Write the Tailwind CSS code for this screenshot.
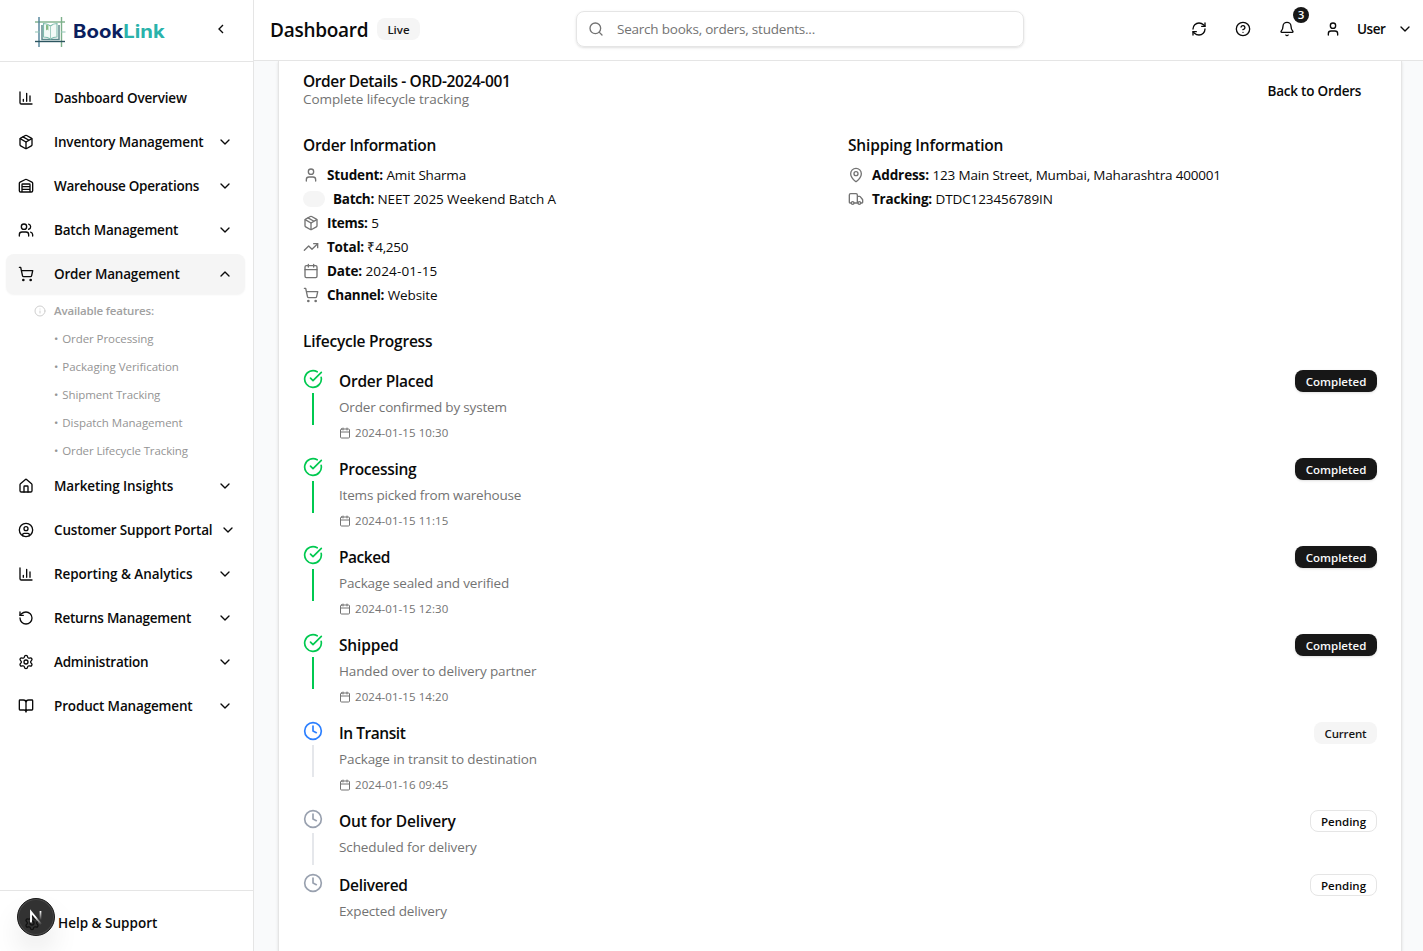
<!DOCTYPE html>
<html lang="en">
<head>
<meta charset="utf-8">
<title>BookLink Dashboard</title>
<script src="https://cdn.jsdelivr.net/npm/@tailwindcss/browser@4"></script>
</head>
<body class="h-screen overflow-hidden bg-white font-['Open_Sans',sans-serif] text-[13.5px] leading-5 text-neutral-950">
<svg class="hidden" xmlns="http://www.w3.org/2000/svg">
  <symbol id="chart" viewBox="0 0 24 24"><path d="M3 3v16a2 2 0 0 0 2 2h16M18 17V9M13 17V5M8 17v-3"/></symbol>
  <symbol id="package" viewBox="0 0 24 24"><path d="M11 21.73a2 2 0 0 0 2 0l7-4A2 2 0 0 0 21 16V8a2 2 0 0 0-1-1.73l-7-4a2 2 0 0 0-2 0l-7 4A2 2 0 0 0 3 8v8a2 2 0 0 0 1 1.73zM12 22V12"/><path d="M3.29 7 12 12l8.71-5M7.5 4.27l9 5.15"/></symbol>
  <symbol id="warehouse" viewBox="0 0 24 24"><path d="M18 21V10a1 1 0 0 0-1-1H7a1 1 0 0 0-1 1v11M22 19a2 2 0 0 1-2 2H4a2 2 0 0 1-2-2V8a2 2 0 0 1 1.132-1.803l7.95-3.974a2 2 0 0 1 1.837 0l7.948 3.974A2 2 0 0 1 22 8zM6 13h12M6 17h12"/></symbol>
  <symbol id="users" viewBox="0 0 24 24"><path d="M16 21v-2a4 4 0 0 0-4-4H6a4 4 0 0 0-4 4v2M16 3.128a4 4 0 0 1 0 7.744M22 21v-2a4 4 0 0 0-3-3.87"/><circle cx="9" cy="7" r="4"/></symbol>
  <symbol id="cart" viewBox="0 0 24 24"><circle cx="8" cy="21" r="1"/><circle cx="19" cy="21" r="1"/><path d="M2.05 2.05h2l2.66 12.42a2 2 0 0 0 2 1.58h9.78a2 2 0 0 0 1.95-1.57l1.65-7.43H5.12"/></symbol>
  <symbol id="home" viewBox="0 0 24 24"><path d="M15 21v-8a1 1 0 0 0-1-1h-4a1 1 0 0 0-1 1v8"/><path d="M3 10a2 2 0 0 1 .709-1.528l7-6a2 2 0 0 1 2.582 0l7 6A2 2 0 0 1 21 10v9a2 2 0 0 1-2 2H5a2 2 0 0 1-2-2z"/></symbol>
  <symbol id="usercircle" viewBox="0 0 24 24"><circle cx="12" cy="12" r="10"/><circle cx="12" cy="10" r="3"/><path d="M7 20.662V19a2 2 0 0 1 2-2h6a2 2 0 0 1 2 2v1.662"/></symbol>
  <symbol id="rotate" viewBox="0 0 24 24"><path d="M3 12a9 9 0 1 0 9-9 9.75 9.75 0 0 0-6.74 2.74L3 8"/><path d="M3 3v5h5"/></symbol>
  <symbol id="gear" viewBox="0 0 24 24"><path d="M9.671 4.136a2.34 2.34 0 0 1 4.659 0 2.34 2.34 0 0 0 3.319 1.915 2.34 2.34 0 0 1 2.33 4.033 2.34 2.34 0 0 0 0 3.831 2.34 2.34 0 0 1-2.33 4.033 2.34 2.34 0 0 0-3.319 1.915 2.34 2.34 0 0 1-4.659 0 2.34 2.34 0 0 0-3.32-1.915 2.34 2.34 0 0 1-2.33-4.033 2.34 2.34 0 0 0 0-3.831A2.34 2.34 0 0 1 6.35 6.051a2.34 2.34 0 0 0 3.319-1.915"/><circle cx="12" cy="12" r="3"/></symbol>
  <symbol id="book" viewBox="0 0 24 24"><path d="M12 7v14M3 18a1 1 0 0 1-1-1V4a1 1 0 0 1 1-1h5a4 4 0 0 1 4 4 4 4 0 0 1 4-4h5a1 1 0 0 1 1 1v13a1 1 0 0 1-1 1h-6a3 3 0 0 0-3 3 3 3 0 0 0-3-3z"/></symbol>
  <symbol id="down" viewBox="0 0 24 24"><path d="m6 9 6 6 6-6"/></symbol>
  <symbol id="up" viewBox="0 0 24 24"><path d="m18 15-6-6-6 6"/></symbol>
  <symbol id="left" viewBox="0 0 24 24"><path d="m15 18-6-6 6-6"/></symbol>
  <symbol id="info" viewBox="0 0 24 24"><circle cx="12" cy="12" r="10"/><path d="M12 16v-4M12 8h.01"/></symbol>
  <symbol id="search" viewBox="0 0 24 24"><circle cx="11" cy="11" r="8"/><path d="m21 21-4.3-4.3"/></symbol>
  <symbol id="refresh" viewBox="0 0 24 24"><path d="M3 12a9 9 0 0 1 9-9 9.75 9.75 0 0 1 6.74 2.74L21 8"/><path d="M21 3v5h-5M21 12a9 9 0 0 1-9 9 9.75 9.75 0 0 1-6.74-2.74L3 16"/><path d="M8 16H3v5"/></symbol>
  <symbol id="help" viewBox="0 0 24 24"><circle cx="12" cy="12" r="10"/><path d="M9.09 9a3 3 0 0 1 5.83 1c0 2-3 3-3 3M12 17h.01"/></symbol>
  <symbol id="bell" viewBox="0 0 24 24"><path d="M10.268 21a2 2 0 0 0 3.464 0M3.262 15.326A1 1 0 0 0 4 17h16a1 1 0 0 0 .74-1.673C19.41 13.956 18 12.499 18 8A6 6 0 0 0 6 8c0 4.499-1.411 5.956-2.738 7.326"/></symbol>
  <symbol id="user" viewBox="0 0 24 24"><path d="M19 21v-2a4 4 0 0 0-4-4H9a4 4 0 0 0-4 4v2"/><circle cx="12" cy="7" r="4"/></symbol>
  <symbol id="trend" viewBox="0 0 24 24"><path d="M16 7h6v6"/><path d="m22 7-8.5 8.5-5-5L2 17"/></symbol>
  <symbol id="calendar" viewBox="0 0 24 24"><path d="M8 2v4M16 2v4M3 10h18"/><rect width="18" height="18" x="3" y="4" rx="2"/></symbol>
  <symbol id="pin" viewBox="0 0 24 24"><path d="M20 10c0 4.993-5.539 10.193-7.399 11.799a1 1 0 0 1-1.202 0C9.539 20.193 4 14.993 4 10a8 8 0 0 1 16 0"/><circle cx="12" cy="10" r="3"/></symbol>
  <symbol id="truck" viewBox="0 0 24 24"><path d="M14 18V6a2 2 0 0 0-2-2H4a2 2 0 0 0-2 2v11a1 1 0 0 0 1 1h2M15 18H9M19 18h2a1 1 0 0 0 1-1v-3.65a1 1 0 0 0-.22-.624l-3.48-4.35A1 1 0 0 0 17.52 8H14"/><circle cx="17" cy="18" r="2"/><circle cx="7" cy="18" r="2"/></symbol>
  <symbol id="check" viewBox="0 0 24 24"><path d="M21.801 10A10 10 0 1 1 17 3.335"/><path d="m9 11 3 3L22 4"/></symbol>
  <symbol id="clock" viewBox="0 0 24 24"><circle cx="12" cy="12" r="10"/><path d="M12 6v6l4 2"/></symbol>
</svg>

<div class="flex h-full">
  <aside class="relative flex w-[254px] shrink-0 flex-col border-r border-neutral-200 bg-white">
    <div class="flex h-[62px] shrink-0 items-center border-b border-neutral-200 pl-[35px]">
      <svg class="mt-[3px] size-[31px]" viewBox="0 0 31 31" fill="none">
        <path d="M0 5h30" stroke="#7db08a" stroke-width="1.4"/>
        <path d="M4 0v30" stroke="#4d8097" stroke-width="1.4"/>
        <path d="M26.500 0v30" stroke="#7db08a" stroke-width="1.4"/>
        <path d="M0 24.500h30" stroke="#2c5560" stroke-width="1.4"/>
        <path d="M0 15h5M26 15h4.500" stroke="#8fc3b4" stroke-width="1.2"/>
        <path d="M7 8v14.500h17V8" stroke="#5f8a8c" stroke-width="1.5"/>
        <path d="M15.500 9C13 7 10.500 6.500 8.500 6.500V20c2.500 0 5 .6 7 2 2-1.400 4-2 6.500-2V6.500c-2 0-4.500.5-6.500 2.500z" fill="#f3faf7" stroke="#7fbcae" stroke-width="1.100"/>
        <path d="M15.500 9v13" stroke="#a3cdc2" stroke-width="1"/>
        <path d="M11 7.500v6l1.200-1 1.200 1V8.500" fill="#86bb86"/>
      </svg>
      <span class="ml-[7px] w-[92px] origin-left scale-x-110 font-['Inter',sans-serif] text-[18.5px] font-bold text-[#0b1f5e]">Book<span class="text-[#2ab3ab]">Link</span></span>
      <svg class="relative -top-0.5 ml-12 size-4 fill-none stroke-current stroke-2"><use href="#left"/></svg>
    </div>

    <nav class="flex flex-1 flex-col gap-1 pt-4 pr-2 pl-1.5 font-semibold [&_svg]:size-4 [&_svg]:shrink-0 [&_svg]:fill-none [&_svg]:stroke-current [&_svg]:stroke-2 [&_svg]:[stroke-linecap:round] [&_svg]:[stroke-linejoin:round]">
      <a class="flex h-10 items-center gap-5 px-3"><svg><use href="#chart"/></svg><span class="flex-1 tracking-[-0.2px]">Dashboard Overview</span></a>
      <a class="flex h-10 items-center gap-5 px-3"><svg><use href="#package"/></svg><span class="flex-1 tracking-[-0.17px]">Inventory Management</span><svg class="-ml-5"><use href="#down"/></svg></a>
      <a class="flex h-10 items-center gap-5 px-3"><svg><use href="#warehouse"/></svg><span class="flex-1 tracking-[-0.27px]">Warehouse Operations</span><svg class="-ml-5"><use href="#down"/></svg></a>
      <a class="flex h-10 items-center gap-5 px-3"><svg><use href="#users"/></svg><span class="flex-1 tracking-[-0.2px]">Batch Management</span><svg><use href="#down"/></svg></a>
      <div class="flex flex-col">
        <a class="flex h-10 items-center gap-5 rounded-lg bg-neutral-100 px-3 shadow-xs"><svg><use href="#cart"/></svg><span class="flex-1 tracking-[-0.18px]">Order Management</span><svg><use href="#up"/></svg></a>
        <div class="flex flex-col pt-[3px] pb-px pl-7 text-[11.5px] font-normal text-[#949494]">
          <div class="flex h-7 items-center gap-2 font-semibold text-neutral-400"><svg class="size-3! opacity-50"><use href="#info"/></svg><span class="tracking-[-0.17px]">Available features:</span></div>
          <div class="flex h-7 items-center gap-1 pl-5 tracking-[-0.08px]"><span>•</span>Order Processing</div>
          <div class="flex h-7 items-center gap-1 pl-5 tracking-[-0.03px]"><span>•</span>Packaging Verification</div>
          <div class="flex h-7 items-center gap-1 pl-5 tracking-[-0.1px]"><span>•</span>Shipment Tracking</div>
          <div class="flex h-7 items-center gap-1 pl-5 tracking-[-0.03px]"><span>•</span>Dispatch Management</div>
          <div class="flex h-7 items-center gap-1 pl-5 tracking-[-0.11px]"><span>•</span>Order Lifecycle Tracking</div>
        </div>
      </div>
      <div class="-mt-1 flex flex-col gap-1">
        <a class="flex h-10 items-center gap-5 px-3"><svg><use href="#home"/></svg><span class="flex-1 tracking-[-0.12px]">Marketing Insights</span><svg><use href="#down"/></svg></a>
        <a class="flex h-10 items-center gap-5 pr-[9px] pl-3"><svg><use href="#usercircle"/></svg><span class="flex-1 tracking-[-0.17px] whitespace-nowrap">Customer Support Portal</span><svg class="-ml-5"><use href="#down"/></svg></a>
        <a class="flex h-10 items-center gap-5 px-3"><svg><use href="#chart"/></svg><span class="flex-1 tracking-[-0.06px]">Reporting &amp; Analytics</span><svg class="-ml-5"><use href="#down"/></svg></a>
        <a class="flex h-10 items-center gap-5 px-3"><svg><use href="#rotate"/></svg><span class="flex-1 tracking-[-0.24px]">Returns Management</span><svg class="-ml-5"><use href="#down"/></svg></a>
        <a class="flex h-10 items-center gap-5 px-3"><svg><use href="#gear"/></svg><span class="flex-1 tracking-[-0.24px]">Administration</span><svg><use href="#down"/></svg></a>
        <a class="flex h-10 items-center gap-5 px-3"><svg><use href="#book"/></svg><span class="flex-1 tracking-[-0.16px]">Product Management</span><svg class="-ml-5"><use href="#down"/></svg></a>
      </div>
    </nav>

    <div class="flex h-[61px] shrink-0 items-center border-t border-neutral-200 pt-1 pl-6 font-semibold">
      <svg class="size-4 fill-none stroke-current stroke-2"><use href="#gear"/></svg>
      <span class="ml-[18px]">Help &amp; Support</span>
    </div>
    <!-- developer tools button floating over the footer -->
    <div class="absolute top-[898px] left-[17px] flex size-[38px] items-center justify-center rounded-full border border-[#1a1a1a] bg-[#323232] shadow-[inset_0_0_0_1px_#4a4a4a,0_16px_32px_-8px_rgba(0,0,0,0.24)]">
      <svg class="absolute top-4 left-[6px] size-4 fill-none stroke-[#111] stroke-2"><use href="#gear"/></svg>
      <svg class="relative size-10 shrink-0" viewBox="0 0 40 40" fill="none">
        <defs>
          <linearGradient id="diag" gradientUnits="userSpaceOnUse" x1="20" y1="20" x2="26" y2="27"><stop stop-color="#fff"/><stop offset="1" stop-color="#fff" stop-opacity="0"/></linearGradient>
          <linearGradient id="bar" gradientUnits="userSpaceOnUse" x1="25" y1="14" x2="25" y2="23"><stop stop-color="#fff"/><stop offset="1" stop-color="#fff" stop-opacity="0"/></linearGradient>
        </defs>
        <path d="M15 25.500V14.800L25.800 28" stroke="url(#diag)" stroke-width="1.900"/>
        <path d="M24.500 14v9" stroke="url(#bar)" stroke-width="1.700"/>
      </svg>
    </div>
  </aside>

  <div class="flex min-w-0 flex-1 flex-col bg-gray-50">
    <header class="flex h-[61px] shrink-0 items-center border-b border-neutral-200 bg-white pr-2.5 pb-[2px] pl-4 [&_svg]:size-4 [&_svg]:shrink-0 [&_svg]:fill-none [&_svg]:stroke-current [&_svg]:stroke-2 [&_svg]:[stroke-linecap:round] [&_svg]:[stroke-linejoin:round]">
      <h1 class="w-[107px] pt-0.5 text-[19px] font-semibold tracking-[-0.27px]">Dashboard</h1>
      <span class="flex h-[22px] w-[43px] items-center justify-center rounded-lg bg-neutral-100 pt-px text-[11.5px] font-semibold text-neutral-900">Live</span>
      <div class="ml-[156px] flex h-9 w-[448px] items-center gap-[13px] rounded-lg border border-neutral-200 pl-[11px] text-neutral-500 shadow-sm">
        <svg><use href="#search"/></svg><span class="tracking-[-0.22px]">Search books, orders, students...</span>
      </div>
      <div class="ml-auto flex items-center font-semibold">
        <svg><use href="#refresh"/></svg>
        <svg class="ml-7"><use href="#help"/></svg>
        <div class="relative ml-7"><svg><use href="#bell"/></svg>
          <span class="absolute -top-[14px] left-[14px] flex size-4 items-center justify-center rounded-full bg-neutral-900 text-[11.5px] text-white">3</span></div>
        <svg class="ml-[30px]"><use href="#user"/></svg>
        <span class="ml-4 w-10 tracking-[-0.45px]">User</span>
        <svg><use href="#down"/></svg>
      </div>
    </header>

    <main class="flex min-h-0 flex-1 overflow-hidden pr-[21px] pl-6 [&_svg]:shrink-0 [&_svg]:fill-none [&_svg]:stroke-current [&_svg]:stroke-2 [&_svg]:[stroke-linecap:round] [&_svg]:[stroke-linejoin:round]">
      <section class="flex flex-1 flex-col border-x border-neutral-200 bg-white px-6 shadow-sm">
        <div class="flex h-[63px] items-start justify-between pt-2.5">
          <div class="flex flex-col">
            <h2 class="h-[18px] text-[15.5px] leading-5 font-semibold tracking-[-0.39px]">Order Details - ORD-2024-001</h2>
            <p class="tracking-[-0.07px] text-neutral-500">Complete lifecycle tracking</p>
          </div>
          <button class="mt-2.5 mr-4 w-[93.500px] text-left font-semibold tracking-[-0.22px] whitespace-nowrap">Back to Orders</button>
        </div>

        <div class="grid h-[207px] grid-cols-[545px_1fr] pt-[11px]">
          <div>
            <h3 class="mb-2.5 h-5 text-[15.5px] font-semibold tracking-[-0.3px]">Order Information</h3>
            <div class="flex flex-col gap-1 [&_svg]:size-4 [&_svg]:text-neutral-500">
              <div class="flex h-5 items-center gap-2"><svg><use href="#user"/></svg><p><b class="tracking-[-0.16px]">Student:</b> <span class="tracking-[-0.18px]">Amit Sharma</span></p></div>
              <div class="flex h-5 items-center gap-2"><i class="h-4 w-[22px] rounded-full bg-neutral-100"></i><p><b class="tracking-[-0.29px]">Batch:</b> <span class="tracking-[-0.09px]">NEET 2025 Weekend Batch A</span></p></div>
              <div class="flex h-5 items-center gap-2"><svg><use href="#package"/></svg><p><b class="tracking-[-0.25px]">Items:</b> 5</p></div>
              <div class="flex h-5 items-center gap-2"><svg><use href="#trend"/></svg><p><b class="tracking-[-0.2px]">Total:</b> <span class="tracking-[-0.28px]">₹4,250</span></p></div>
              <div class="flex h-5 items-center gap-2"><svg><use href="#calendar"/></svg><p><b class="tracking-[-0.17px]">Date:</b> <span class="tracking-[0.15px]">2024-01-15</span></p></div>
              <div class="flex h-5 items-center gap-2"><svg><use href="#cart"/></svg><p><b class="tracking-[-0.27px]">Channel:</b> <span class="tracking-[-0.1px]">Website</span></p></div>
            </div>
          </div>
          <div>
            <h3 class="mb-2.5 h-5 text-[15.5px] font-semibold tracking-[-0.17px]">Shipping Information</h3>
            <div class="flex flex-col gap-1 [&_svg]:size-4 [&_svg]:text-neutral-500">
              <div class="flex h-5 items-center gap-2"><svg><use href="#pin"/></svg><p><b class="tracking-[-0.1px]">Address:</b> <span class="tracking-[-0.18px]">123 Main Street, Mumbai, Maharashtra 400001</span></p></div>
              <div class="flex h-5 items-center gap-2"><svg><use href="#truck"/></svg><p><b class="tracking-[-0.21px]">Tracking:</b> <span class="tracking-[-0.11px]">DTDC123456789IN</span></p></div>
            </div>
          </div>
        </div>

        <h3 class="mb-[18px] h-5 text-[15.5px] font-semibold tracking-[-0.22px]">Lifecycle Progress</h3>

        <div class="flex flex-col">
          <div class="flex h-[88px] gap-4">
            <div class="flex w-5 flex-col items-center gap-1"><svg class="size-5 text-[#00c950]"><use href="#check"/></svg><i class="h-8 w-0.5 bg-[#00c950]"></i></div>
            <div class="flex-1"><h4 class="text-[15.5px] leading-6 font-semibold tracking-[-0.25px]">Order Placed</h4><p class="mt-1 tracking-[-0.17px] text-neutral-500">Order confirmed by system</p><p class="mt-2 flex h-4 items-center gap-1 text-[11.5px] tracking-[0.06px] text-neutral-500"><svg class="size-3"><use href="#calendar"/></svg>2024-01-15 10:30</p></div>
            <span class="mt-px flex h-[22px] w-[82px] items-center justify-center rounded-lg bg-neutral-900 pt-px text-[11.5px] font-semibold text-neutral-50 shadow-sm">Completed</span>
          </div>
          <div class="flex h-[88px] gap-4">
            <div class="flex w-5 flex-col items-center gap-1"><svg class="size-5 text-[#00c950]"><use href="#check"/></svg><i class="h-8 w-0.5 bg-[#00c950]"></i></div>
            <div class="flex-1"><h4 class="text-[15.5px] leading-6 font-semibold tracking-[-0.28px]">Processing</h4><p class="mt-1 tracking-[-0.18px] text-neutral-500">Items picked from warehouse</p><p class="mt-2 flex h-4 items-center gap-1 text-[11.5px] tracking-[0.06px] text-neutral-500"><svg class="size-3"><use href="#calendar"/></svg>2024-01-15 11:15</p></div>
            <span class="mt-px flex h-[22px] w-[82px] items-center justify-center rounded-lg bg-neutral-900 pt-px text-[11.5px] font-semibold text-neutral-50 shadow-sm">Completed</span>
          </div>
          <div class="flex h-[88px] gap-4">
            <div class="flex w-5 flex-col items-center gap-1"><svg class="size-5 text-[#00c950]"><use href="#check"/></svg><i class="h-8 w-0.5 bg-[#00c950]"></i></div>
            <div class="flex-1"><h4 class="text-[15.5px] leading-6 font-semibold tracking-[-0.45px]">Packed</h4><p class="mt-1 tracking-[-0.14px] text-neutral-500">Package sealed and verified</p><p class="mt-2 flex h-4 items-center gap-1 text-[11.5px] tracking-[0.06px] text-neutral-500"><svg class="size-3"><use href="#calendar"/></svg>2024-01-15 12:30</p></div>
            <span class="mt-px flex h-[22px] w-[82px] items-center justify-center rounded-lg bg-neutral-900 pt-px text-[11.5px] font-semibold text-neutral-50 shadow-sm">Completed</span>
          </div>
          <div class="flex h-[88px] gap-4">
            <div class="flex w-5 flex-col items-center gap-1"><svg class="size-5 text-[#00c950]"><use href="#check"/></svg><i class="h-8 w-0.5 bg-[#00c950]"></i></div>
            <div class="flex-1"><h4 class="text-[15.5px] leading-6 font-semibold tracking-[-0.15px]">Shipped</h4><p class="mt-1 tracking-[-0.13px] text-neutral-500">Handed over to delivery partner</p><p class="mt-2 flex h-4 items-center gap-1 text-[11.5px] tracking-[0.06px] text-neutral-500"><svg class="size-3"><use href="#calendar"/></svg>2024-01-15 14:20</p></div>
            <span class="mt-px flex h-[22px] w-[82px] items-center justify-center rounded-lg bg-neutral-900 pt-px text-[11.5px] font-semibold text-neutral-50 shadow-sm">Completed</span>
          </div>
          <div class="flex h-[88px] gap-4">
            <div class="flex w-5 flex-col items-center gap-1"><svg class="size-5 text-[#2b7fff]"><use href="#clock"/></svg><i class="h-8 w-0.5 bg-gray-200"></i></div>
            <div class="flex-1"><h4 class="text-[15.5px] leading-6 font-semibold tracking-[-0.45px]">In Transit</h4><p class="mt-1 tracking-[-0.12px] text-neutral-500">Package in transit to destination</p><p class="mt-2 flex h-4 items-center gap-1 text-[11.5px] tracking-[0.06px] text-neutral-500"><svg class="size-3"><use href="#calendar"/></svg>2024-01-16 09:45</p></div>
            <span class="mt-px flex h-[22px] w-[63px] items-center justify-center rounded-lg bg-neutral-100 pt-px text-[11.5px] font-semibold tracking-[-0.15px] text-neutral-900">Current</span>
          </div>
          <div class="flex h-16 gap-4">
            <div class="flex w-5 flex-col items-center gap-1"><svg class="size-5 text-gray-400"><use href="#clock"/></svg><i class="h-8 w-0.5 bg-gray-200"></i></div>
            <div class="flex-1"><h4 class="text-[15.5px] leading-6 font-semibold tracking-[-0.15px]">Out for Delivery</h4><p class="mt-1 tracking-[-0.1px] text-neutral-500">Scheduled for delivery</p></div>
            <span class="mt-px flex h-[22px] w-[67px] items-center justify-center rounded-lg border border-neutral-200 pt-px text-[11.5px] font-semibold">Pending</span>
          </div>
          <div class="flex h-16 gap-4">
            <div class="flex w-5 flex-col items-center gap-1"><svg class="size-5 text-gray-400"><use href="#clock"/></svg></div>
            <div class="flex-1"><h4 class="text-[15.5px] leading-6 font-semibold tracking-[-0.31px]">Delivered</h4><p class="mt-1 tracking-[-0.15px] text-neutral-500">Expected delivery</p></div>
            <span class="mt-px flex h-[22px] w-[67px] items-center justify-center rounded-lg border border-neutral-200 pt-px text-[11.5px] font-semibold">Pending</span>
          </div>
        </div>
      </section>
    </main>
  </div>
</div>
</body>
</html>
